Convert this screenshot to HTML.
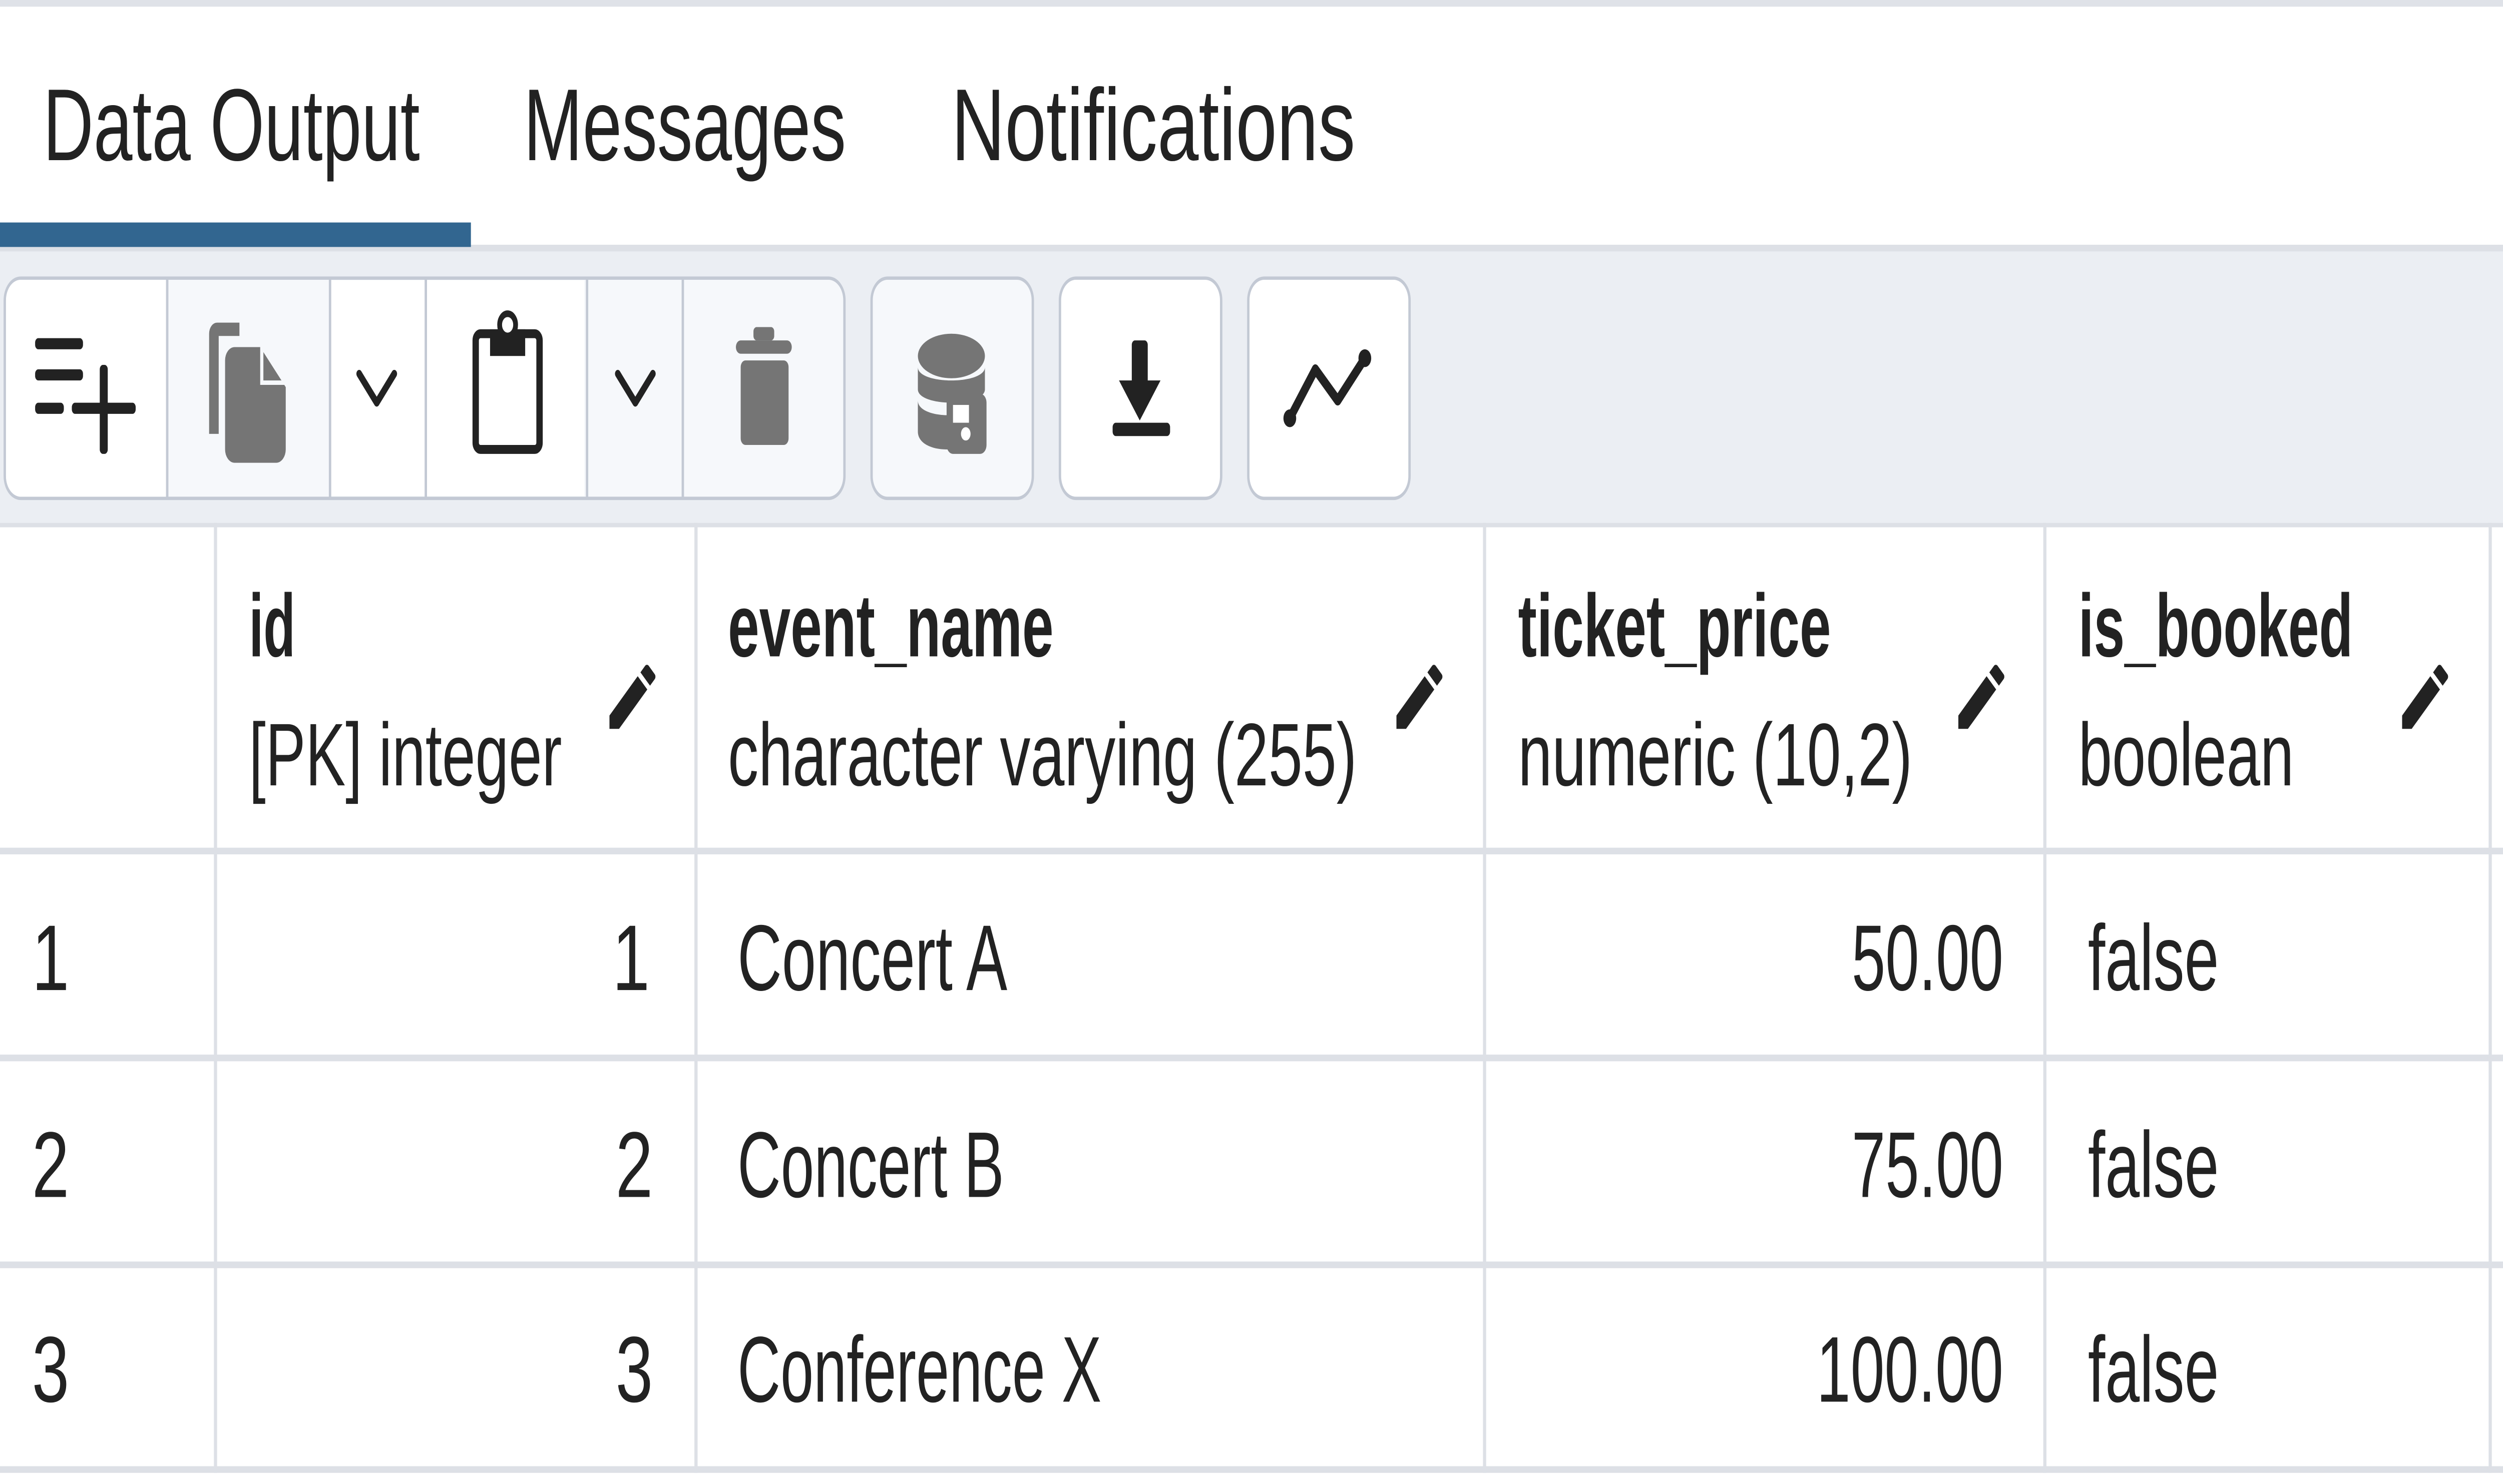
<!DOCTYPE html>
<html><head><meta charset="utf-8"><style>
html,body{margin:0;padding:0;background:#fff;overflow:hidden;width:100%;height:100%}
svg{position:absolute;left:0;top:0;width:100vw;height:100vh;display:block}
text{font-family:"Liberation Sans",sans-serif;fill:#222}
</style></head><body>
<svg viewBox="0 0 1568 667" preserveAspectRatio="none">
 <rect width="1568" height="667" fill="#fff"/>
 <rect x="0" y="0" width="1568" height="3" fill="#dfe2e8"/>
 <g font-size="46">
  <text x="27" y="72" textLength="236" lengthAdjust="spacingAndGlyphs">Data Output</text>
  <text x="328" y="72" textLength="202" lengthAdjust="spacingAndGlyphs">Messages</text>
  <text x="596" y="72" textLength="253" lengthAdjust="spacingAndGlyphs">Notifications</text>
 </g>
 <rect x="0" y="110" width="1568" height="125" fill="#ebeef3"/>
 <rect x="0" y="110" width="1568" height="3" fill="#dde0e6"/>
 <rect x="0" y="100" width="295" height="11" fill="#326690"/>
 <!-- toolbar -->
 <rect x="3" y="125" width="526" height="99" rx="10" fill="#f6f8fb" stroke="#c3c9d4" stroke-width="1.5"/>
 <path d="M13 125.75h91v97.5h-91a9.25 9.25 0 01-9.25-9.25v-79a9.25 9.25 0 019.25-9.25z" fill="#fff"/>
 <rect x="206" y="126" width="160" height="97" fill="#fff"/>
 <g fill="#c3c9d4">
  <rect x="104" y="125" width="1.5" height="99"/><rect x="206" y="125" width="1.5" height="99"/><rect x="266" y="125" width="1.5" height="99"/><rect x="367" y="125" width="1.5" height="99"/><rect x="427" y="125" width="1.5" height="99"/>
 </g>
 <rect x="546" y="125" width="101" height="99" rx="10" fill="#f6f8fb" stroke="#c3c9d4" stroke-width="1.5"/>
 <rect x="664" y="125" width="101" height="99" rx="10" fill="#fff" stroke="#c3c9d4" stroke-width="1.5"/>
 <rect x="782" y="125" width="101" height="99" rx="10" fill="#fff" stroke="#c3c9d4" stroke-width="1.5"/>
 <g fill="#222">
  <rect x="22" y="152" width="30" height="5" rx="2"/><rect x="22" y="166" width="30" height="5" rx="2"/><rect x="22" y="181" width="18" height="5" rx="2"/>
  <rect x="45" y="181" width="40" height="5" rx="2"/><rect x="62.5" y="164" width="5" height="40" rx="2"/>
 </g>
 <g fill="#757575">
  <path d="M131 150a5 5 0 015-5h14v6h-13v44h-6z"/>
  <path d="M141 162a6 6 0 016-6h16l16 18v28a6 6 0 01-6 6h-26a6 6 0 01-6-6z"/>
 </g>
 <path d="M164 156v16h15" fill="none" stroke="#f6f8fb" stroke-width="2"/>
 <g fill="none" stroke="#222" stroke-width="3.5" stroke-linecap="round" stroke-linejoin="round">
  <polyline points="225,168 236,181 247,168"/><polyline points="387,168 398,181 409,168"/>
 </g>
 <rect x="298" y="150" width="40" height="52" rx="3" fill="none" stroke="#222" stroke-width="4"/>
 <path d="M307 148h22v12h-22z" fill="#222"/><circle cx="318" cy="146" r="5" fill="#fff" stroke="#222" stroke-width="3"/>
 <g fill="#757575">
  <rect x="461" y="153" width="35" height="6" rx="3"/><rect x="472" y="147" width="13" height="6" rx="2"/>
  <rect x="464" y="162" width="30" height="38" rx="3"/>
  <ellipse cx="596" cy="160" rx="21" ry="10"/>
  <path d="M575 165c0 8 42 8 42 0v10c0 8-42 8-42 0z"/>
  <path d="M575 180c0 8 30 8 30 4v16c-10 4-30 2-30-6z"/>
  <rect x="593" y="177" width="25" height="27" rx="4"/>
 </g>
 <g fill="#fff"><rect x="597" y="182" width="10" height="8"/><circle cx="605" cy="195" r="3"/></g>
 <g fill="#222">
  <rect x="709" y="153" width="10" height="26" rx="2"/><path d="M701 171h26l-13 18z"/><rect x="697" y="190" width="36" height="6" rx="2"/>
 </g>
 <g fill="none" stroke="#222" stroke-width="4.5" stroke-linecap="round" stroke-linejoin="round">
  <polyline points="808,188 824,166 838,180 855,161"/>
 </g>
 <g fill="#222"><circle cx="808" cy="188" r="4"/><circle cx="855" cy="161" r="4"/></g>
 <!-- table lines -->
 <g fill="#dde0e6">
  <rect x="0" y="235" width="1568" height="2"/>
  <rect x="0" y="381" width="1568" height="3"/><rect x="0" y="474" width="1568" height="3"/><rect x="0" y="567" width="1568" height="3"/><rect x="0" y="659" width="1568" height="3"/>
  <rect x="134" y="235" width="2" height="427"/><rect x="435" y="235" width="2" height="427"/><rect x="929" y="235" width="2" height="427"/><rect x="1280" y="235" width="2" height="427"/><rect x="1559" y="235" width="2" height="427"/>
 </g>
 <g fill="#222">
  <path transform="translate(377,294) scale(1.6)" d="M3 17.25V21h3.75L17.81 9.94l-3.75-3.75L3 17.25zM20.71 7.04a1 1 0 000-1.410l-2.34-2.34a1 1 0 00-1.41 0l-1.83 1.83 3.75 3.75 1.83-1.83z"/>
  <path transform="translate(870,294) scale(1.6)" d="M3 17.25V21h3.75L17.81 9.94l-3.75-3.75L3 17.25zM20.71 7.04a1 1 0 000-1.41l-2.34-2.34a1 1 0 00-1.41 0l-1.83 1.83 3.75 3.75 1.83-1.83z"/>
  <path transform="translate(1222,294) scale(1.6)" d="M3 17.25V21h3.75L17.81 9.94l-3.75-3.75L3 17.25zM20.71 7.04a1 1 0 000-1.41l-2.34-2.34a1 1 0 00-1.41 0l-1.83 1.83 3.75 3.75 1.83-1.83z"/>
  <path transform="translate(1500,294) scale(1.6)" d="M3 17.25V21h3.75L17.81 9.94l-3.75-3.75L3 17.25zM20.71 7.04a1 1 0 000-1.41l-2.34-2.34a1 1 0 00-1.41 0l-1.83 1.83 3.75 3.75 1.83-1.83z"/>
 </g>
 <!-- header text -->
 <g font-size="40" font-weight="bold">
  <text x="156" y="295" textLength="29" lengthAdjust="spacingAndGlyphs">id</text>
  <text x="456" y="295" textLength="204" lengthAdjust="spacingAndGlyphs">event_name</text>
  <text x="951" y="295" textLength="196" lengthAdjust="spacingAndGlyphs">ticket_price</text>
  <text x="1302" y="295" textLength="172" lengthAdjust="spacingAndGlyphs">is_booked</text>
 </g>
 <g font-size="40">
  <text x="156" y="353" textLength="196" lengthAdjust="spacingAndGlyphs">[PK] integer</text>
  <text x="456" y="353" textLength="394" lengthAdjust="spacingAndGlyphs">character varying (255)</text>
  <text x="951" y="353" textLength="247" lengthAdjust="spacingAndGlyphs">numeric (10,2)</text>
  <text x="1302" y="353" textLength="135" lengthAdjust="spacingAndGlyphs">boolean</text>
 </g>
 <g font-size="42">
  <text x="20" y="445">1</text><text x="407" y="445" text-anchor="end">1</text>
  <text x="462" y="445" textLength="169" lengthAdjust="spacingAndGlyphs">Concert A</text>
  <text x="1160" y="445" textLength="95" lengthAdjust="spacingAndGlyphs">50.00</text>
  <text x="1308" y="445" textLength="82" lengthAdjust="spacingAndGlyphs">false</text>
  <text x="20" y="538">2</text><text x="409" y="538" text-anchor="end">2</text>
  <text x="462" y="538" textLength="167" lengthAdjust="spacingAndGlyphs">Concert B</text>
  <text x="1160" y="538" textLength="95" lengthAdjust="spacingAndGlyphs">75.00</text>
  <text x="1308" y="538" textLength="82" lengthAdjust="spacingAndGlyphs">false</text>
  <text x="20" y="630">3</text><text x="409" y="630" text-anchor="end">3</text>
  <text x="462" y="630" textLength="228" lengthAdjust="spacingAndGlyphs">Conference X</text>
  <text x="1138" y="630" textLength="117" lengthAdjust="spacingAndGlyphs">100.00</text>
  <text x="1308" y="630" textLength="82" lengthAdjust="spacingAndGlyphs">false</text>
 </g>
</svg>
</body></html>
